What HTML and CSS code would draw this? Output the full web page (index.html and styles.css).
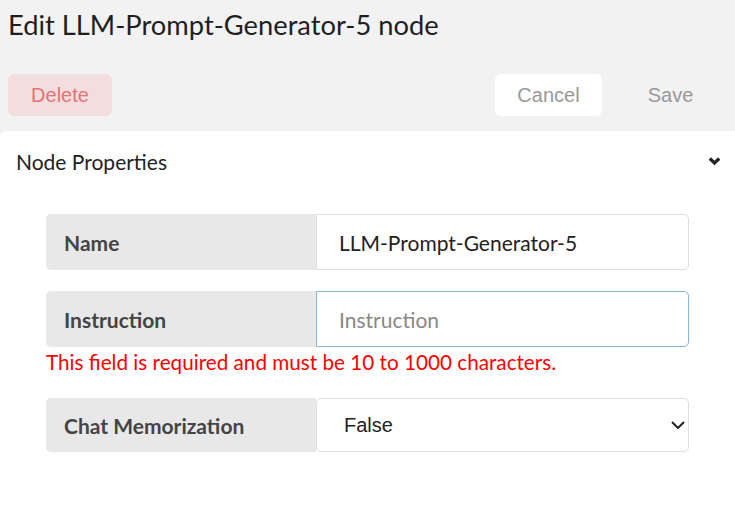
FILE: index.html
```html
<!DOCTYPE html>
<html lang="en">
<head>
  <meta charset="UTF-8" />
  <title>Edit node</title>
  <link rel="stylesheet" href="styles.css">
</head>
<body>

  <header class="top">
    <h1>Edit LLM-Prompt-Generator-5 node</h1>
    <div class="actions">
      <button class="btn btn-delete">Delete</button>
      <div class="actions-right">
        <button class="btn btn-cancel">Cancel</button>
        <button class="btn btn-save">Save</button>
      </div>
    </div>
  </header>

  <section class="panel">
    <div class="panel-head">
      <span>Node Properties</span>
      <svg class="chev" width="13" height="10" viewBox="0 0 13 10">
        <path d="M1.8 2.5 L6.5 7 L11.2 2.5" fill="none" stroke="#222" stroke-width="3.2" />
      </svg>
    </div>

    <form class="props">
      <div class="row">
        <label class="row-label" for="name">Name</label>
        <input class="row-input" type="text" id="name" value="LLM-Prompt-Generator-5" />
      </div>

      <div class="row">
        <label class="row-label" for="instr">Instruction</label>
        <input class="row-input focus" type="text" id="instr" placeholder="Instruction" autofocus />
      </div>
      <p class="error">This field is required and must be 10 to 1000 characters.</p>

      <div class="row row-select">
        <label class="row-label" for="mem">Chat Memorization</label>
        <div class="select-wrap">
          <select class="row-input" id="mem">
            <option>False</option>
            <option>True</option>
          </select>
          <svg class="sel-arrow" width="14" height="8" viewBox="0 0 14 8">
            <path d="M1 1 L7 7 L13 1" fill="none" stroke="#222" stroke-width="2" />
          </svg>
        </div>
      </div>
    </form>
  </section>

</body>
</html>
```

FILE: styles.css
```css
body {
  margin: 0;
  font-family: Lato, 'Open Sans', sans-serif;
  background-color: #f2f2f2;
  color: #222;
}
.top {
  padding: 0 8px;
}
.top h1 {
  margin: 0;
  padding-top: 8px;
  font-size: 27.3px;
  font-weight: 400;
  line-height: 34px;
  color: #1f1f1f;
}
.actions {
  display: flex;
  justify-content: space-between;
  align-items: center;
  margin-top: 32px;
}
.actions-right {
  display: flex;
  gap: 15px;
  margin-right: 3px;
}
.btn {
  font-family: 'Liberation Sans', Arial, sans-serif;
  font-size: 20px;
  border: none;
  border-radius: 6px;
  height: 42px;
  width: 104px;
  cursor: pointer;
  background: transparent;
  color: #999;
}
.btn-delete {
  background-color: #f2dede;
  color: #e57373;
}
.btn-cancel {
  background-color: #fff;
  width: 107px;
}
.btn-save {
  width: 107px;
}
.panel {
  background: #fff;
  margin-top: 15px;
  border-radius: 6px 0 0 0;
  min-height: calc(100vh - 131px);
}
.panel-head {
  display: flex;
  justify-content: space-between;
  align-items: center;
  padding: 18px 14px 0 16px;
  font-size: 21px;
  height: 24px;
}
.chev {
  display: block;
}
.props {
  margin: 41px 0 0 46px;
  width: 643px;
}
.row {
  display: flex;
  height: 56px;
  margin-bottom: 21px;
}
.row-label {
  display: flex;
  align-items: center;
  width: 252px;
  padding-left: 18px;
  background: #e8e8e8;
  border-radius: 5px 0 0 5px;
  font-size: 21px;
  font-weight: 700;
  color: #444;
}
.row-input {
  flex: 1;
  min-width: 0;
  box-sizing: border-box;
  border: 1px solid #dedede;
  border-radius: 0 5px 5px 0;
  padding: 0 22px;
  font-family: Lato, sans-serif;
  font-size: 21px;
  color: #222;
  outline: none;
}
.row-input::placeholder {
  color: #888;
}
.row-input.focus {
  border-color: #86b7de;
}
.error {
  margin: -21px 0 0 0;
  font-size: 20.7px;
  line-height: 30px;
  color: #ff0000;
}
.row-select {
  margin-top: 21px;
  height: 54px;
}
.select-wrap {
  flex: 1;
  position: relative;
  display: flex;
}
.select-wrap select {
  appearance: none;
  background: #fff;
  font-family: 'Liberation Sans', Arial, sans-serif;
  font-size: 20px;
  padding-left: 27px;
  border-radius: 5px;
}
.sel-arrow {
  position: absolute;
  right: 4px;
  top: 23px;
  pointer-events: none;
}
```
